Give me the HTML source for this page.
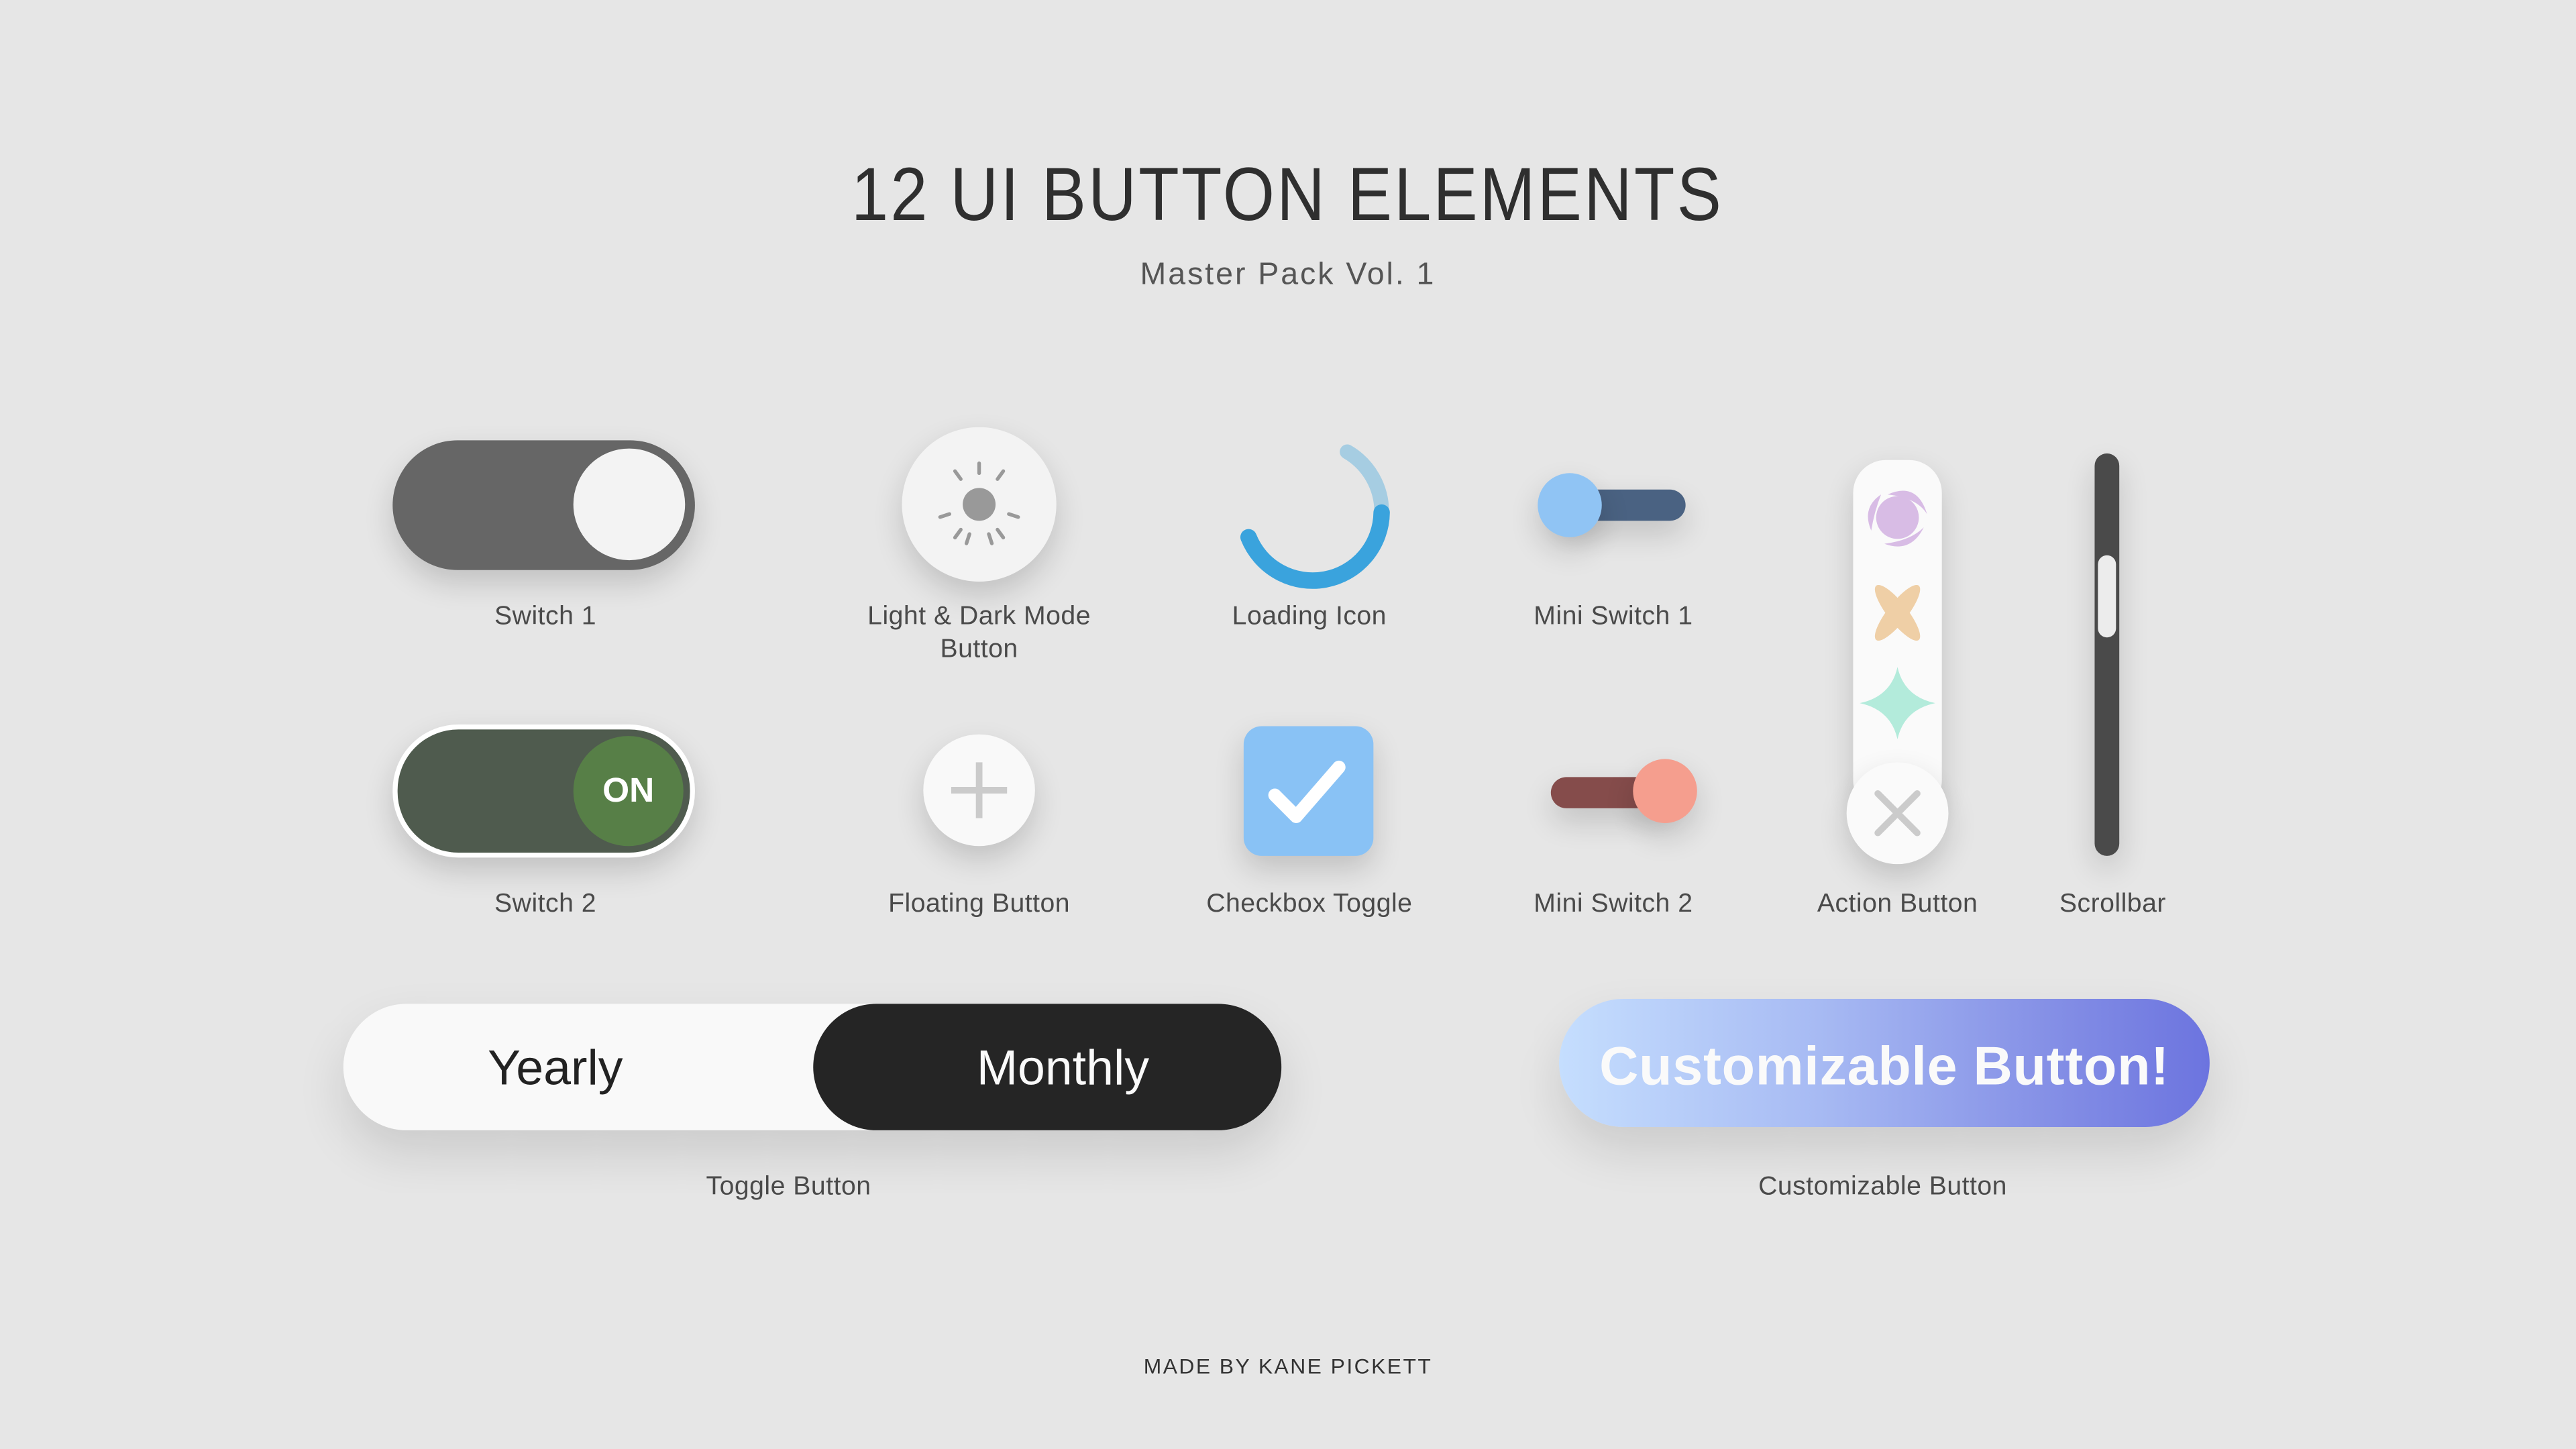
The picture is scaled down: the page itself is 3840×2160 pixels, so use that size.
<!DOCTYPE html>
<html><head><meta charset="utf-8"><style>
html,body{margin:0;padding:0;width:3840px;height:2160px;overflow:hidden;background:#e6e6e6}
#w{position:absolute;left:0;top:0;width:1568px;height:882px;transform:scale(2.44898);transform-origin:0 0;font-family:"Liberation Sans",sans-serif}
.a{position:absolute}
.lbl{position:absolute;transform:translateX(-50%);font-size:16px;color:#4a4a4a;white-space:nowrap;text-align:center;line-height:20px;letter-spacing:0.2px}
.sh{box-shadow:0 8px 18px rgba(0,0,0,0.16)}
</style></head><body><div id="w">
<div class="a" style="left:0;width:1568px;top:91px;text-align:center"><span style="display:inline-block;font-size:46px;letter-spacing:1.5px;color:#2f2f2f;transform:scaleX(0.88);transform-origin:50% 50%">12 UI BUTTON ELEMENTS</span></div>
<div class="a" style="left:0;width:1568px;top:157px;text-align:center;font-size:19px;letter-spacing:1.2px;color:#555">Master Pack Vol. 1</div>

<!-- Switch 1 -->
<div class="a sh" style="left:239px;top:268px;width:184px;height:79px;border-radius:40px;background:#666"></div>
<div class="a" style="left:349px;top:273px;width:68px;height:68px;border-radius:50%;background:#f3f3f3"></div>
<div class="lbl" style="left:332px;top:366px">Switch 1</div>

<!-- Light -->
<div class="a sh" style="left:549px;top:260px;width:94px;height:94px;border-radius:50%;background:#f3f3f3"></div>
<svg class="a" style="left:566px;top:277px" width="60" height="60" viewBox="-30 -30 60 60">
<circle r="10" fill="#999"/>
<g stroke="#999" stroke-width="2.2" stroke-linecap="round">
<line x1="0" y1="-19" x2="0" y2="-25"/><line x1="0" y1="-19" x2="0" y2="-25" transform="rotate(36)"/><line x1="0" y1="-19" x2="0" y2="-25" transform="rotate(108)"/><line x1="0" y1="-19" x2="0" y2="-25" transform="rotate(144)"/><line x1="0" y1="-19" x2="0" y2="-25" transform="rotate(-144)"/><line x1="0" y1="-19" x2="0" y2="-25" transform="rotate(-108)"/><line x1="0" y1="-19" x2="0" y2="-25" transform="rotate(-36)"/>
<line x1="0" y1="-19" x2="0" y2="-25" transform="rotate(162)"/><line x1="0" y1="-19" x2="0" y2="-25" transform="rotate(-162)"/>
</g></svg>
<div class="lbl" style="left:596px;top:366px">Light &amp; Dark Mode<br>Button</div>

<!-- Loading -->
<svg class="a" style="left:749px;top:262px" width="100" height="100" viewBox="-50 -50 100 100">
<path d="M 21 -37 A 42 42 0 0 1 42 0" fill="none" stroke="#a6cde2" stroke-width="9" stroke-linecap="round"/>
<path d="M 42 0 A 42 42 0 0 1 -39 15" fill="none" stroke="#3aa3dd" stroke-width="10" stroke-linecap="round"/>
</svg>
<div class="lbl" style="left:797px;top:366px">Loading Icon</div>

<!-- Mini switch 1 -->
<div class="a sh" style="left:950px;top:298px;width:76px;height:19px;border-radius:10px;background:#4a6282"></div>
<div class="a sh" style="left:936px;top:288px;width:39px;height:39px;border-radius:50%;background:#90c4f4"></div>
<div class="lbl" style="left:982px;top:366px">Mini Switch 1</div>

<!-- Action button -->
<div class="a sh" style="left:1128px;top:280px;width:54px;height:215px;border-radius:20px;background:#fafafa"></div>
<svg class="a" style="left:1135px;top:295px" width="40" height="40" viewBox="-20 -20 40 40"><circle r="13" fill="#d8bce5"/><path d="M-6 -14 Q12 -22 18 -2 Q12 -12 -6 -14Z M16 6 Q8 22 -8 16 Q8 14 16 6Z M-16 8 Q-22 -6 -10 -14 Q-14 -4 -16 8Z" fill="#d8bce5"/></svg>
<svg class="a" style="left:1135px;top:353px" width="40" height="40" viewBox="-20 -20 40 40"><g fill="#efcfa6"><ellipse rx="6" ry="21" transform="rotate(38)"/><ellipse rx="6" ry="21" transform="rotate(-38)"/></g></svg>
<svg class="a" style="left:1132px;top:405px" width="46" height="46" viewBox="-23 -23 46 46"><path d="M0 -22 Q4 -4 23 0 Q4 4 0 22 Q-4 4 -23 0 Q-4 -4 0 -22Z" fill="#b3ebdb"/></svg>
<div class="a sh" style="left:1124px;top:464px;width:62px;height:62px;border-radius:50%;background:#fafafa"></div>
<svg class="a" style="left:1138px;top:478px" width="34" height="34" viewBox="0 0 34 34"><path d="M5 5 L29 29 M29 5 L5 29" stroke="#cbcbcb" stroke-width="4" stroke-linecap="round"/></svg>
<div class="lbl" style="left:1155px;top:541px">Action Button</div>

<!-- Scrollbar -->
<div class="a sh" style="left:1275px;top:276px;width:15px;height:245px;border-radius:8px;background:#4a4a4a"></div>
<div class="a" style="left:1277px;top:338px;width:11px;height:50px;border-radius:6px;background:#ececec"></div>
<div class="lbl" style="left:1286px;top:541px">Scrollbar</div>

<!-- Switch 2 -->
<div class="a sh" style="left:239px;top:441px;width:178px;height:75px;border-radius:40px;background:#4f5b4e;border:3px solid #fff"></div>
<div class="a" style="left:349px;top:448px;width:67px;height:67px;border-radius:50%;background:#577f47;color:#fff;font-weight:bold;font-size:21px;line-height:67px;text-align:center">ON</div>
<div class="lbl" style="left:332px;top:541px">Switch 2</div>

<!-- Floating -->
<div class="a sh" style="left:562px;top:447px;width:68px;height:68px;border-radius:50%;background:#f9f9f9"></div>
<svg class="a" style="left:576px;top:461px" width="40" height="40" viewBox="0 0 40 40"><path d="M20 3 V37 M3 20 H37" stroke="#cbcbcb" stroke-width="4"/></svg>
<div class="lbl" style="left:596px;top:541px">Floating Button</div>

<!-- Checkbox -->
<div class="a sh" style="left:757px;top:442px;width:79px;height:79px;border-radius:11px;background:#89c2f5"></div>
<svg class="a" style="left:757px;top:442px" width="79" height="79" viewBox="0 0 79 79"><path d="M19 42 L32 55 L58 25" fill="none" stroke="#fff" stroke-width="8" stroke-linecap="round" stroke-linejoin="round"/></svg>
<div class="lbl" style="left:797px;top:541px">Checkbox Toggle</div>

<!-- Mini switch 2 -->
<div class="a sh" style="left:944px;top:473px;width:70px;height:19px;border-radius:10px;background:#854c4b"></div>
<div class="a sh" style="left:994px;top:462px;width:39px;height:39px;border-radius:50%;background:#f59e8e"></div>
<div class="lbl" style="left:982px;top:541px">Mini Switch 2</div>

<!-- Toggle -->
<div class="a" style="left:209px;top:611px;width:571px;height:77px;border-radius:39px;background:#f9f9f9;box-shadow:0 14px 30px rgba(0,0,0,0.12)"></div>
<div class="a" style="left:495px;top:611px;width:285px;height:77px;border-radius:39px;background:#252525"></div>
<div class="a" style="left:238px;width:200px;top:634px;text-align:center;font-size:30px;color:#222">Yearly</div>
<div class="a" style="left:547px;width:200px;top:634px;text-align:center;font-size:30px;color:#fafafa">Monthly</div>
<div class="lbl" style="left:480px;top:713px">Toggle Button</div>

<!-- Customizable -->
<div class="a" style="left:949px;top:608px;width:396px;height:78px;border-radius:39px;background:linear-gradient(90deg,#c5defe 0%,#a7baf3 40%,#8590e6 75%,#6c74df 100%);box-shadow:0 14px 30px rgba(0,0,0,0.12)"></div>
<div class="a" style="left:949px;width:396px;top:630px;text-align:center;font-size:33px;font-weight:bold;color:#fafafa;letter-spacing:0.3px">Customizable Button!</div>
<div class="lbl" style="left:1146px;top:713px">Customizable Button</div>

<div class="a" style="left:0;width:1568px;top:824px;text-align:center;font-size:13px;letter-spacing:1px;color:#333">MADE BY KANE PICKETT</div>
</div></body></html>
